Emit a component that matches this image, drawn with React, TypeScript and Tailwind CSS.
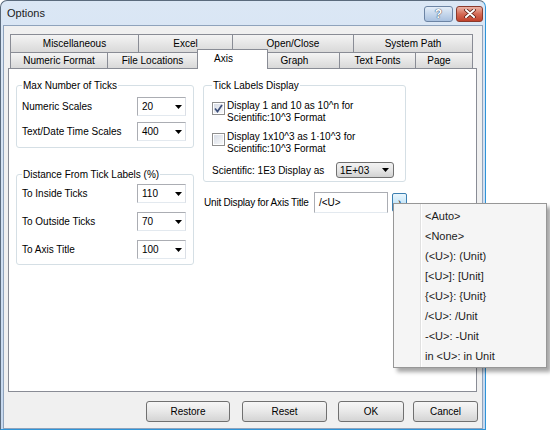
import React from 'react';

const ui = "font-['Liberation_Sans',Arial,sans-serif]";

const Arrow = () => (
  <svg width="7" height="4" viewBox="0 0 7 4">
    <polygon points="0,0 7,0 3.5,4" fill="#000" />
  </svg>
);

const Combo = ({ value }: { value: string }) => (
  <div className="w-[49px] h-[19px] border border-[#abadb3] border-b-[#e3e9ef] border-r-[#dbdfe6] bg-white flex items-center justify-between pl-[4px] pr-[3px]">
    <span>{value}</span>
    <Arrow />
  </div>
);

const Checkbox = ({ checked }: { checked?: boolean }) => (
  <div className="mt-[2px] w-[13px] h-[13px] shrink-0 border border-[#8f8f8f] bg-white p-[1px]">
    <div className="w-full h-full bg-linear-to-br from-[#d8dde6] to-[#f7f8fa] flex items-center justify-center">
      {checked && (
        <svg width="9" height="9" viewBox="0 0 9 9">
          <path d="M1 4.5 L3.5 7.5 L8 1" stroke="#3d4f7a" strokeWidth="1.7" fill="none" />
        </svg>
      )}
    </div>
  </div>
);

const Tab = ({ label, w, first, cls = '' }: { label: string; w: string; first?: boolean; cls?: string }) => (
  <div
    className={`${w} h-full flex items-center justify-center border-t border-r border-[#898c95] bg-linear-to-b from-[#f4f4f4] to-[#d9d9d9] ${first ? 'border-l' : ''} ${cls}`}
  >
    {label}
  </div>
);

const Button = ({ label, w }: { label: string; w: string }) => (
  <div
    className={`${w} h-[21px] rounded-[3px] border border-[#707070] bg-linear-to-b from-[#f6f6f6] via-[#e8e8e8] to-[#d4d4d4] flex items-center justify-center`}
  >
    {label}
  </div>
);

const menuItems = [
  '<Auto>',
  '<None>',
  '(<U>): (Unit)',
  '[<U>]: [Unit]',
  '{<U>}: {Unit}',
  '/<U>: /Unit',
  '-<U>: -Unit',
  'in <U>: in Unit',
];

export default function App() {
  return (
    <div className={`relative w-[550px] h-[430px] overflow-hidden bg-white text-[10px] text-black ${ui}`}>
      {/* window */}
      <div className="w-[486px] h-[430px] flex flex-col rounded-t-[7px] border border-[#5b6b7d] border-r-[#2e94d8] border-b-[#2e94d8] bg-linear-to-b from-[#dbe7f5] to-[#c6d8ee]">
        <div className="h-[24px] flex items-center justify-between pl-[6px] pr-[2px] pt-px">
          <span className="text-[11px] text-[#1a1a1a]">Options</span>
          <div className="flex items-center gap-[3px]">
            <div className="w-[29px] h-[16px] rounded-[3px] border border-[#6c84a4] bg-linear-to-b from-[#e3edf8] to-[#a9c1df] flex items-center justify-center text-[12px] font-bold leading-none text-white [text-shadow:0_0_1px_#2c3e57,0_0_1px_#2c3e57]">
              ?
            </div>
            <div className="w-[27px] h-[16px] rounded-[3px] border border-[#8b3a2c] bg-linear-to-b from-[#eab3a6] via-[#d46a55] to-[#c0412b] flex items-center justify-center">
              <svg width="12" height="9" viewBox="0 0 12 9">
                <path d="M2 1 L10 8 M10 1 L2 8" stroke="#5a1c12" strokeWidth="3.6" strokeLinecap="round" />
                <path d="M2 1 L10 8 M10 1 L2 8" stroke="#fff" strokeWidth="2" strokeLinecap="round" />
              </svg>
            </div>
          </div>
        </div>

        {/* client area */}
        <div className="flex-1 mx-[2px] border border-[#8fa3bc] bg-[#f0f0f0] pl-[4px] pr-[5px] pt-[8px] flex flex-col">
          {/* tabs */}
          <div className="ml-[2px]">
            <div className="flex h-[18px]">
              <Tab label="Miscellaneous" w="w-[129px]" first />
              <Tab label="Excel" w="w-[94px]" />
              <Tab label="Open/Close" w="w-[121px]" />
              <Tab label="System Path" w="w-[119px]" />
            </div>
            <div className="relative z-10 flex items-end h-[16px]">
              <Tab label="Numeric Format" w="w-[98px]" first />
              <Tab label="File Locations" w="w-[90px]" />
              <div className="w-[71px] -ml-px h-[20px] -mb-px flex items-center justify-center pr-[18px] pb-[2px] border-l border-t border-r border-[#898c95] bg-white">
                Axis
              </div>
              <Tab label="Graph" w="w-[72px]" cls="pr-[18px]" />
              <Tab label="Text Fonts" w="w-[76px]" />
              <Tab label="Page" w="w-[57px]" cls="pr-[10px]" />
            </div>
          </div>

          {/* tab page */}
          <div className="h-[324px] border border-[#898c95] bg-white pl-[7px] pt-[10px] flex">
            <div className="w-[178px] flex flex-col">
              <fieldset className="border border-[#d5dfe5] rounded-[3px] px-[5px] pt-[5px] pb-[6px] flex flex-col gap-[6px]">
                <legend className="px-px leading-[13px]">Max Number of Ticks</legend>
                <div className="flex items-center justify-between pr-[2px]">
                  <span>Numeric Scales</span>
                  <Combo value="20" />
                </div>
                <div className="flex items-center justify-between pr-[2px]">
                  <span>Text/Date Time Scales</span>
                  <Combo value="400" />
                </div>
              </fieldset>
              <fieldset className="mt-[20px] border border-[#d5dfe5] rounded-[3px] px-[5px] pt-[3px] pb-[5px] flex flex-col gap-[9px]">
                <legend className="px-px leading-[13px]">Distance From Tick Labels (%)</legend>
                <div className="flex items-center justify-between pr-[2px]">
                  <span>To Inside Ticks</span>
                  <Combo value="110" />
                </div>
                <div className="flex items-center justify-between pr-[2px]">
                  <span>To Outside Ticks</span>
                  <Combo value="70" />
                </div>
                <div className="flex items-center justify-between pr-[2px]">
                  <span>To Axis Title</span>
                  <Combo value="100" />
                </div>
              </fieldset>
            </div>

            <div className="ml-[9px] w-[203px] flex flex-col">
              <fieldset className="border border-[#d5dfe5] rounded-[3px] pl-[8px] pr-[11px] pt-[8px] pb-[3px] flex flex-col gap-[7px]">
                <legend className="px-px leading-[13px]">Tick Labels Display</legend>
                <div className="flex items-start gap-[2px] leading-[12px]">
                  <Checkbox checked />
                  <span>
                    Display 1 and 10 as 10^n for
                    <br />
                    Scientific:10^3 Format
                  </span>
                </div>
                <div className="flex items-start gap-[2px] leading-[12px]">
                  <Checkbox />
                  <span>
                    Display 1x10^3 as 1·10^3 for
                    <br />
                    Scientific:10^3 Format
                  </span>
                </div>
                <div className="flex items-center justify-between">
                  <span>Scientific: 1E3 Display as</span>
                  <div className="w-[58px] h-[16px] rounded-[3px] border border-[#707070] bg-linear-to-b from-[#f3f3f3] via-[#e6e6e6] to-[#d2d2d2] flex items-center justify-between pl-[3px] pr-[4px]">
                    <span>1E+03</span>
                    <Arrow />
                  </div>
                </div>
              </fieldset>
              <div className="mt-[10px] pl-px flex items-center">
                <span className="w-[110px] shrink-0 whitespace-nowrap tracking-[-0.2px]">Unit Display for Axis Title</span>
                <div className="w-[74px] h-[21px] shrink-0 border border-[#abadb3] border-b-[#e3e9ef] bg-white flex items-center pl-[4px]">
                  /&lt;U&gt;
                </div>
                <div className="ml-[4px] w-[15px] h-[19px] shrink-0 rounded-[2px] border border-[#3c7fb1] bg-linear-to-b from-[#eaf6fd] to-[#a7d9f5] flex items-center justify-center text-[9px] leading-[9px] text-black">
                  ›
                </div>
              </div>
            </div>
          </div>

          {/* buttons */}
          <div className="mt-[9px] -mr-px flex justify-end">
            <Button label="Restore" w="w-[84px]" />
            <div className="w-[12px]" />
            <Button label="Reset" w="w-[85px]" />
            <div className="w-[11px]" />
            <Button label="OK" w="w-[66px]" />
            <div className="w-[9px]" />
            <Button label="Cancel" w="w-[65px]" />
          </div>
        </div>
      </div>

      {/* popup menu */}
      <div className="absolute left-[393px] top-[203px] w-[154px] h-[165px] border border-[#979797] bg-[#f5f5f5] shadow-[4px_4px_4px_rgba(0,0,0,0.35)] flex text-[11px] text-[#1b1b1b]">
        <div className="w-[27px] border-r border-[#e0e0e0] shadow-[1px_0_0_#fff]" />
        <div className="flex-1 pl-[4px] pt-[2px] flex flex-col">
          {menuItems.map((m) => (
            <div key={m} className="h-[20px] flex items-center">
              {m}
            </div>
          ))}
        </div>
      </div>
    </div>
  );
}
